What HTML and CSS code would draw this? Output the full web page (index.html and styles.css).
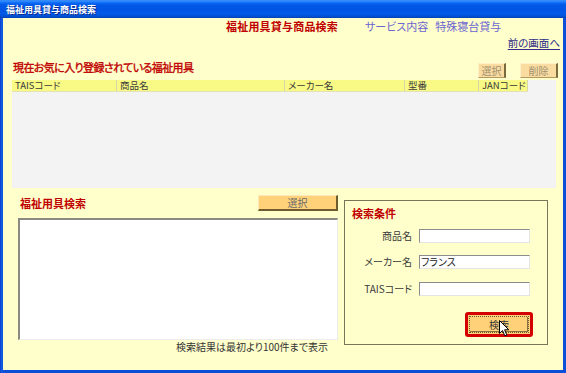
FILE: index.html
```html
<!DOCTYPE html>
<html lang="ja">
<head>
<meta charset="utf-8">
<title>福祉用具貸与商品検索</title>
<link rel="stylesheet" href="styles.css">
</head>
<body>
<div class="window">
  <div class="titlebar"><span class="title">福祉用具貸与商品検索</span></div>
  <div class="frame">
    <div class="client">
      <div class="header">
        <span class="page-title">福祉用具貸与商品検索</span>
        <span class="crumb crumb-1">サービス内容</span>
        <span class="crumb crumb-2">特殊寝台貸与</span>
      </div>
      <div class="back-row"><a class="back" href="#">前の画面へ</a></div>

      <div class="fav-head">
        <h2 class="sec-title fav-title">現在お気に入り登録されている福祉用具</h2>
        <div class="fav-buttons">
          <button class="btn-light btn-a">選択</button>
          <button class="btn-light btn-b">削除</button>
        </div>
      </div>

      <div class="grid">
        <div class="grid-head">
          <div class="col c1">TAISコード</div>
          <div class="col c2">商品名</div>
          <div class="col c3">メーカー名</div>
          <div class="col c4">型番</div>
          <div class="col c5">JANコード</div>
        </div>
      </div>

      <div class="lower">
        <div class="search-list">
          <div class="list-head">
            <h2 class="sec-title list-title">福祉用具検索</h2>
            <button class="btn-select">選択</button>
          </div>
          <div class="listbox"></div>
          <div class="note">検索結果は最初より100件まで表示</div>
        </div>

        <div class="cond">
          <h3 class="sec-title cond-title">検索条件</h3>
          <div class="field f1"><span class="label">商品名</span><div class="input"></div></div>
          <div class="field f2"><span class="label">メーカー名</span><div class="input">フランス</div></div>
          <div class="field f3"><span class="label">TAISコード</span><div class="input"></div></div>
          <div class="btn-row">
            <button class="search-btn"><span class="search-inner">検索</span></button>
            <svg class="cursor" width="11" height="17" viewBox="0 0 11 17">
              <path d="M0.5 0.5 L0.5 13.5 L3.5 10.5 L5.8 15.8 L7.8 15 L5.6 9.8 L9.8 9.8 Z" fill="#fff" stroke="#000" stroke-width="1" stroke-linejoin="miter"/>
            </svg>
          </div>
        </div>
      </div>
    </div>
  </div>
</div>
</body>
</html>
```

FILE: styles.css
```css
* {
  box-sizing: border-box;
  margin: 0;
  padding: 0;
}

html,
body {
  width: 566px;
  height: 373px;
  overflow: hidden;
  background: #0b46d6;
}

body {
  font-family: "Noto Sans CJK JP", "Noto Sans", sans-serif;
  font-size: 10px;
  line-height: 1;
  color: #2a2a2a;
  font-feature-settings: "palt";
}

.window {
  width: 566px;
  height: 373px;
  display: flex;
  flex-direction: column;
}

.titlebar {
  height: 18px;
  flex: none;
  padding: 3px 0 0 6px;
  background: linear-gradient(to bottom,
    #3a8cf6 0%,
    #2a86ff 8%,
    #0a6af5 16%,
    #0058e6 28%,
    #0055e4 60%,
    #005be9 75%,
    #0052d6 90%,
    #003fb0 100%);
}

.title {
  display: block;
  color: #fff;
  font-size: 9px;
  font-weight: bold;
  line-height: 14px;
  text-shadow: 1px 1px 0 #0a2a8a;
  font-feature-settings: normal;
}

.frame {
  flex: 1;
  display: flex;
  padding: 0 3px 3px 3px;
  background: linear-gradient(to right, #0a3fc8 0, #1560e8 2px, #0b4fd8 3px);
}

.client {
  flex: 1;
  display: flex;
  flex-direction: column;
  background: #ffffcc;
}

/* header */
.header {
  display: flex;
  align-items: center;
  height: 16px;
  padding-left: 223px;
}

.page-title {
  color: #c00000;
  font-size: 11px;
  font-weight: bold;
  letter-spacing: 0.2px;
}

.crumb {
  color: #6a64d0;
  font-size: 11px;
}

.crumb-1 {
  margin-left: 27px;
}

.crumb-2 {
  margin-left: 7px;
}

.back-row {
  margin-top: 1px;
  height: 16px;
  display: flex;
  justify-content: flex-end;
  align-items: center;
  padding-right: 3px;
}

.back {
  color: #2e2e88;
  font-size: 10.5px;
  text-decoration: underline;
  text-underline-offset: 2px;
}

/* favourites */
.sec-title {
  color: #c00000;
  font-size: 11px;
  font-weight: bold;
  line-height: 14px;
}

.fav-head {
  margin-top: 12px;
  height: 15px;
  display: flex;
  align-items: center;
  justify-content: space-between;
  padding-left: 10px;
  padding-right: 5px;
}

.fav-title {
  font-weight: normal;
  -webkit-text-stroke: 0.35px #c00000;
  letter-spacing: -0.6px;
  margin-bottom: 8px;
}

.fav-buttons {
  display: flex;
  gap: 14px;
}

.btn-light {
  height: 15px;
  font-family: inherit;
  font-size: 10px;
  color: #a09070;
  background: #fbdca0;
  border: none;
  border-top: 1px solid #fff0c8;
  border-left: 1px solid #fff0c8;
  border-right: 2px solid #7a6a40;
  border-bottom: 1px solid #b09a60;
  line-height: 12px;
}

.btn-a {
  width: 28px;
}

.btn-b {
  width: 38px;
}

.grid {
  margin: 2px 0 0 9px;
  width: 544px;
  height: 108px;
  background: #f3f3f3;
}

.grid-head {
  display: flex;
  width: 516px;
  height: 12px;
  background: #f9f985;
  border-bottom: 1px solid #e2e2b4;
}

.col {
  padding-left: 3px;
  font-size: 9.5px;
  line-height: 11px;
  color: #3a3a3a;
  border-right: 1px solid #d6d6a8;
  white-space: nowrap;
}

.c1 { width: 105px; }
.c2 { width: 168px; }
.c3 { width: 120px; }
.c4 { width: 74px; }
.c5 { width: 49px; }

/* lower area */
.lower {
  margin-top: 7px;
  display: flex;
  align-items: flex-start;
  padding-left: 15px;
  gap: 6px;
}

.search-list {
  width: 320px;
  display: flex;
  flex-direction: column;
}

.list-head {
  height: 16px;
  display: flex;
  align-items: center;
  justify-content: space-between;
  padding-left: 2px;
}

.list-title {
  margin-bottom: 1px;
}

.btn-select {
  width: 80px;
  height: 16px;
  font-family: inherit;
  font-size: 10px;
  color: #6a6a6a;
  background: #ffd27a;
  border: none;
  border-top: 1px solid #ffe8b8;
  border-left: 1px solid #ffe8b8;
  border-right: 2px solid #6e5c2c;
  border-bottom: 2px solid #6e5c2c;
  line-height: 12px;
}

.listbox {
  margin-top: 7px;
  height: 122px;
  background: #fff;
  border-top: 2px solid #8a8a80;
  border-left: 2px solid #8a8a80;
  border-right: 1px solid #ececec;
  border-bottom: 1px solid #ececec;
}

.note {
  height: 14px;
  line-height: 14px;
  text-align: right;
  padding-right: 10px;
  font-size: 10px;
  color: #333;
}

/* search condition panel */
.cond {
  margin-top: 5px;
  width: 204px;
  height: 145px;
  border: 1px solid #76765a;
  padding: 5px 0 0 7px;
  display: flex;
  flex-direction: column;
}

.cond-title {
  line-height: 14px;
}

.field {
  display: flex;
  align-items: center;
  height: 14px;
}

.f1 { margin-top: 9px; }
.f2 { margin-top: 12px; }
.f3 { margin-top: 13px; }

.label {
  width: 60px;
  text-align: right;
  font-size: 10px;
  color: #3a3a3a;
}

.input {
  margin-left: 7px;
  width: 111px;
  height: 14px;
  background: #fff;
  border-top: 1px solid #8c8c8c;
  border-left: 1px solid #8c8c8c;
  border-right: 1px solid #e4e4e4;
  border-bottom: 1px solid #e4e4e4;
  font-size: 10px;
  line-height: 12px;
  padding-left: 1px;
  color: #222;
}

.btn-row {
  position: relative;
  margin-top: 16px;
  padding-left: 113px;
  height: 25px;
}

.search-btn {
  width: 68px;
  height: 25px;
  border: 3px solid #d40000;
  border-radius: 3px;
  background: #ffd27a;
  padding: 1px;
  font-family: inherit;
  display: flex;
}

.search-inner {
  flex: 1;
  display: flex;
  align-items: center;
  justify-content: center;
  border: 1px dotted #6a5a30;
  font-size: 10px;
  color: #333;
  box-shadow: inset -1px -1px 0 #8a7040;
}

.cursor {
  position: absolute;
  left: 147px;
  top: 8px;
}
```
